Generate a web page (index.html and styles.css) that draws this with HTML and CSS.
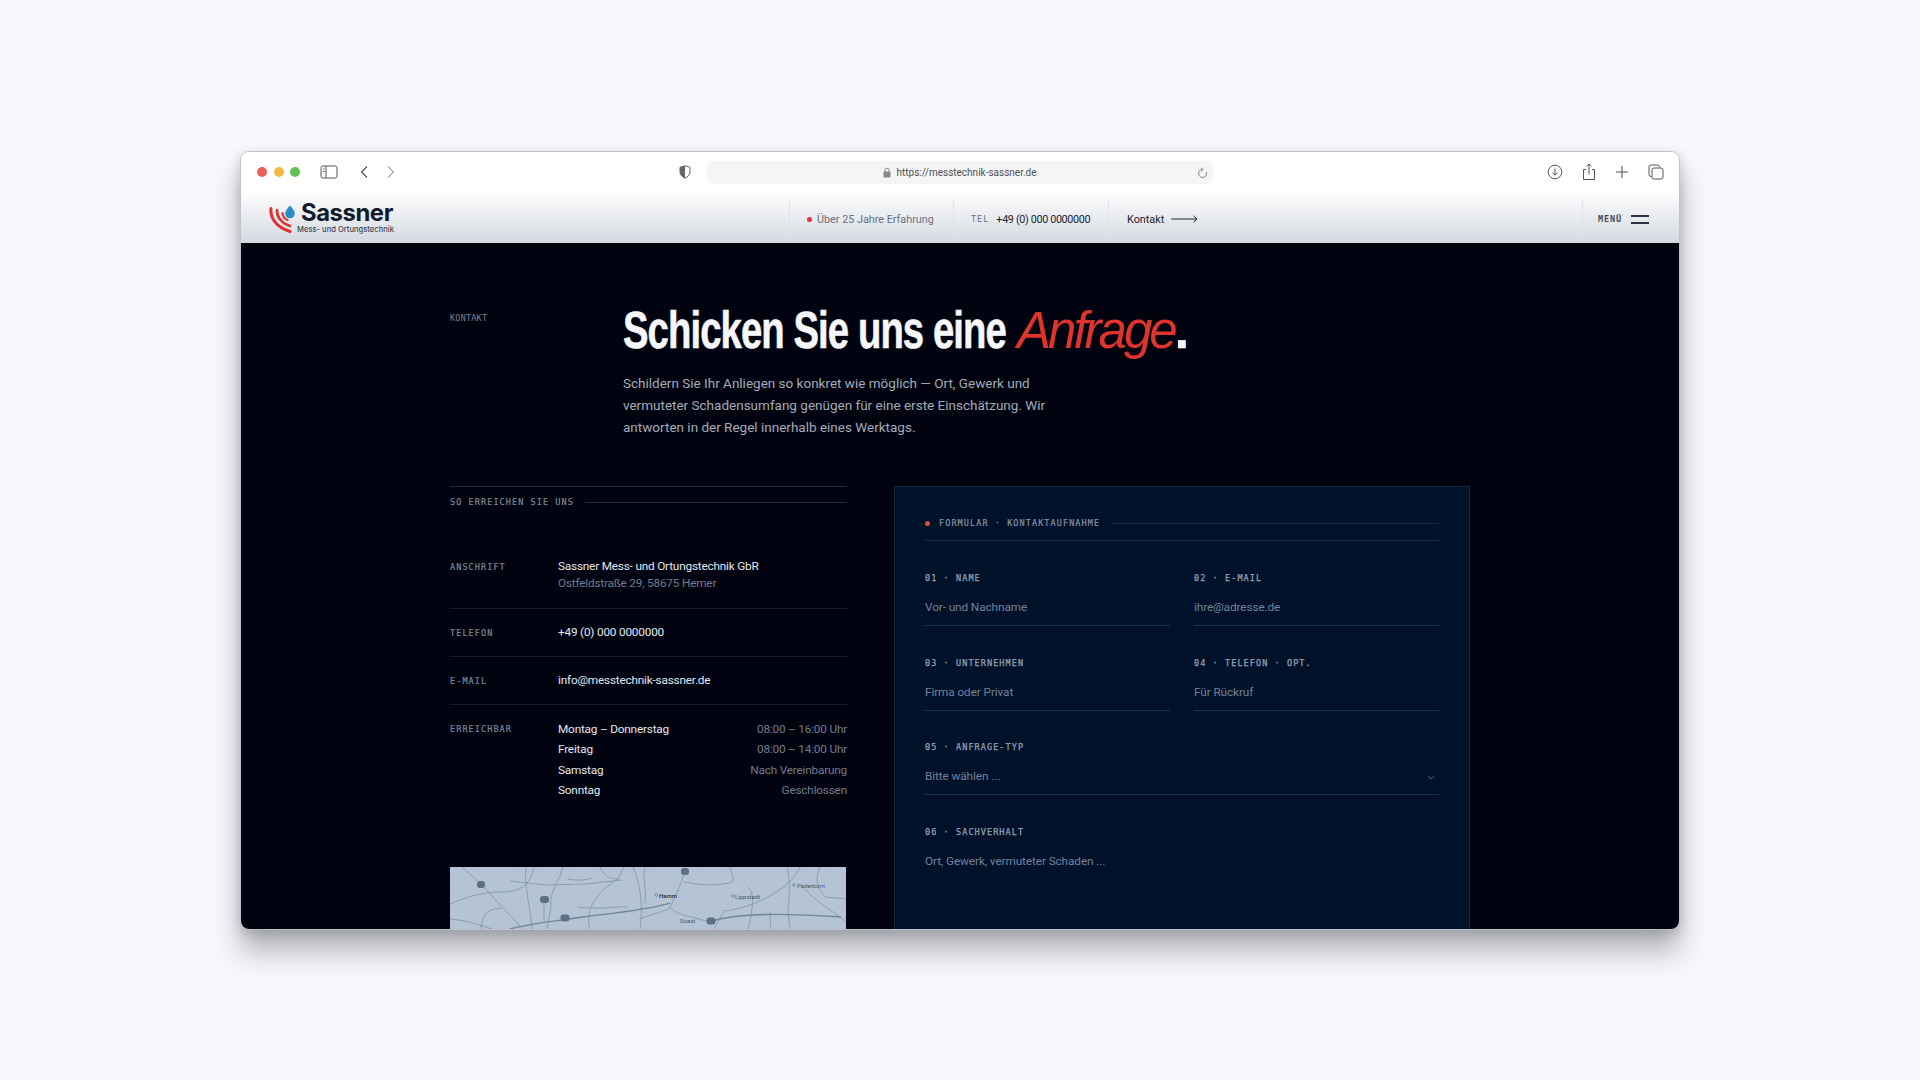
FILE: index.html
```html
<!DOCTYPE html>
<html lang="de">
<head>
    <meta charset="UTF-8">
    <meta name="viewport" content="width=device-width, initial-scale=1.0">
    <title>Sassner - Kontakt</title>
    <link rel="stylesheet" href="styles.css">
</head>
<body>
    <div class="window">
        <!-- Safari toolbar -->
        <div class="toolbar">
            <div class="lights">
                <span class="light red"></span>
                <span class="light yellow"></span>
                <span class="light green"></span>
            </div>
            <svg class="tool-icon sidebar-icon" width="18" height="14" viewBox="0 0 18 14" fill="none" stroke="#555" stroke-width="1">
                <rect x="1" y="1" width="16" height="12" rx="1.5"/>
                <path d="M6 1v12M3 4h1.5M3 6.500h1.500"/>
            </svg>
            <svg class="tool-icon back-icon" width="10" height="14" viewBox="0 0 10 14" fill="none" stroke="#555" stroke-width="1.300">
                <path d="M8 1.500 2.500 7 8 12.500"/>
            </svg>
            <svg class="tool-icon forward-icon" width="10" height="14" viewBox="0 0 10 14" fill="none" stroke="#aaa" stroke-width="1.300">
                <path d="M2 1.500 7.500 7 2 12.500"/>
            </svg>
            <svg class="tool-icon shield-icon" width="12" height="14" viewBox="0 0 12 14">
                <path d="M6 .8 11 2.300v4.500c0 3-2.200 5.100-5 6.400C3.200 11.900 1 9.800 1 6.800V2.300z" fill="none" stroke="#666" stroke-width="1"/>
                <path d="M6 .8 1 2.300v4.500c0 3 2.200 5.100 5 6.400z" fill="#666"/>
            </svg>
            <div class="urlbar">
                <svg class="lock-icon" width="8" height="11" viewBox="0 0 8 11">
                    <path d="M2 5V3.200a2 2 0 0 1 4 0V5" fill="none" stroke="#888" stroke-width="1"/>
                    <rect x=".5" y="4.500" width="7" height="6" rx="1" fill="#888"/>
                </svg>
                <span>https://messtechnik-sassner.de</span>
                <svg class="reload-icon" width="11" height="12" viewBox="0 0 11 12" fill="none" stroke="#777" stroke-width=".9">
                    <path d="M5 2.500a4 4 0 1 0 4.300 2.500M4 .8 6 2.500 4.300 4.300"/>
                </svg>
            </div>
            <div class="tool-right">
                <svg width="16" height="16" viewBox="0 0 16 16" fill="none" stroke="#555" stroke-width="1">
                    <circle cx="8" cy="8" r="6.800"/>
                    <path d="M8 4.500v6.500M5.500 8.700 8 11.200l2.500-2.500"/>
                </svg>
                <svg width="14" height="18" viewBox="0 0 14 18" fill="none" stroke="#555" stroke-width="1">
                    <path d="M4 6.500H1.500v10h11v-10H10M7 11.500V1M4.500 3.300 7 1l2.500 2.300"/>
                </svg>
                <svg width="14" height="14" viewBox="0 0 14 14" fill="none" stroke="#555" stroke-width="1.100">
                    <path d="M7 1v12M1 7h12"/>
                </svg>
                <svg width="16" height="16" viewBox="0 0 16 16" fill="none" stroke="#555" stroke-width="1">
                    <path d="M3.500 12.500H3A2 2 0 0 1 1 10.500V3a2 2 0 0 1 2-2h6.500a2 2 0 0 1 2 2v.5"/>
                    <rect x="4" y="4" width="11" height="11" rx="2"/>
                </svg>
            </div>
        </div>

        <!-- site nav -->
        <header class="nav">
            <div class="logo">
                <svg class="logo-mark" width="30" height="30" viewBox="0 0 30 30" fill="none">
                    <path d="M2 3.500c-1 9.500 5 18.500 19 23" stroke="#e0322c" stroke-width="3" stroke-linecap="round"/>
                    <path d="M8 5c-.5 6.500 4 13 13 16" stroke="#e0322c" stroke-width="2.600" stroke-linecap="round"/>
                    <path d="M13.500 8c.2 3 2 5.500 5 7" stroke="#e0322c" stroke-width="2.200" stroke-linecap="round"/>
                    <path d="M21 .5c2.300 3 4.800 5.200 4.800 8a4.800 4.800 0 0 1-9.600 0c0-2.800 2.500-5 4.800-8z" fill="#2a8fc4"/>
                </svg>
                <div class="logo-text">
                    <div class="logo-name">Sassner</div>
                    <div class="logo-sub">Mess- und Ortungstechnik</div>
                </div>
            </div>
            <div class="nav-cells">
                <div class="nav-cell cell-exp"><span class="red-dot"></span>Über 25 Jahre Erfahrung</div>
                <div class="nav-cell cell-tel"><span class="tel-label">TEL</span>+49 (0) 000 0000000</div>
                <div class="nav-cell cell-contact">Kontakt
                    <svg width="27" height="8" viewBox="0 0 27 8" fill="none" stroke="#222b3a" stroke-width="1">
                        <path d="M0 4h26M22.500 .8 26 4l-3.500 3.200"/>
                    </svg>
                </div>
            </div>
            <div class="nav-menu">
                <span class="menu-label">MENÜ</span>
                <span class="burger"></span>
            </div>
        </header>

        <main class="page">
            <section class="head">
                <div class="eyebrow">KONTAKT</div>
                <div>
                    <h1><span class="h1-main">Schicken Sie uns eine</span><em>Anfrage</em><span>.</span></h1>
                    <p class="lead">Schildern Sie Ihr Anliegen so konkret wie möglich — Ort, Gewerk und vermuteter Schadensumfang genügen für eine erste Einschätzung. Wir antworten in der Regel innerhalb eines Werktags.</p>
                </div>
            </section>

            <section class="columns">
                <div class="info">
                    <div class="rule-label info-title"><span>SO ERREICHEN SIE UNS</span></div>

                    <div class="info-row first">
                        <div class="key">ANSCHRIFT</div>
                        <div class="val">Sassner Mess- und Ortungstechnik GbR<div class="muted">Ostfeldstraße 29, 58675 Hemer</div></div>
                    </div>
                    <div class="info-row">
                        <div class="key">TELEFON</div>
                        <div class="val">+49 (0) 000 0000000</div>
                    </div>
                    <div class="info-row">
                        <div class="key">E-MAIL</div>
                        <div class="val">info@messtechnik-sassner.de</div>
                    </div>
                    <div class="info-row last">
                        <div class="key">ERREICHBAR</div>
                        <div class="hours">
                            <div class="hour"><span>Montag – Donnerstag</span><span class="muted">08:00 – 16:00 Uhr</span></div>
                            <div class="hour"><span>Freitag</span><span class="muted">08:00 – 14:00 Uhr</span></div>
                            <div class="hour"><span>Samstag</span><span class="muted">Nach Vereinbarung</span></div>
                            <div class="hour"><span>Sonntag</span><span class="muted">Geschlossen</span></div>
                        </div>
                    </div>

                    <div class="map">
                        <svg width="396" height="62" viewBox="0 0 396 62" fill="none">
                            <rect width="396" height="62" fill="#b4c4d5"/>
                            <g stroke="#8193a8" stroke-width=".8">
                                <path d="M12 0 31 17l22 24 20 21"/>
                                <path d="M0 52c20 2 30 6 42 10"/>
                                <path d="M0 37c15-6 30-12 50-12s30-6 34-25"/>
                                <path d="M76 0c-2 18 4 38 6 62"/>
                                <path d="M113 0c-4 16-14 24-12 40l-4 22"/>
                                <path d="M94 32v24"/>
                                <path d="M60 14l36 4 40-1 36-4"/>
                                <path d="M118 12c10 2 18 1 24-1"/>
                                <path d="M140 62c-6-20 8-38 28-50l6-12"/>
                                <path d="M150 0c4 10 12 12 18 12"/>
                                <path d="M183 0c8 18 10 40 7 62"/>
                                <path d="M195 0c-3 14 2 20 0 36"/>
                                <path d="M235 4c-4 14-10 26-16 38l-30 10"/>
                                <path d="M220 40c6 10 30 10 40 16"/>
                                <path d="M280 0c2 8 6 14 0 16-20 3-30 2-46-1"/>
                                <path d="M298 20c8 8 4 24 0 42"/>
                                <path d="M337 0c4 16 2 30 1 44l2 18"/>
                                <path d="M350 0c-4 10-12 16-16 20-20 14-40 22-60 24l-10 18"/>
                                <path d="M355 22c10 12 25 20 40 32"/>
                                <path d="M128 40c20 3 40-1 50 0"/>
                                <path d="M320 44c0 8 1 12 0 18"/>
                                <path d="M30 62c4-8 0-20 22-21"/>
                                <path d="M370 0c-6 14-2 24 6 30l20 2"/>
                            </g>
                            <path d="M60 62c30-8 50-8 72-12 30-4 60-6 88-14M261 54c30-8 70-8 130-4" stroke="#72849a" stroke-width="1.300"/>
                            <g fill="#5f7084">
                                <rect x="27" y="14" width="8" height="7" rx="3"/>
                                <rect x="90" y="29" width="9" height="7" rx="3"/>
                                <rect x="110.500" y="47.500" width="9" height="7" rx="3"/>
                                <rect x="231" y="1" width="8" height="7" rx="3"/>
                                <rect x="256.500" y="50.500" width="9" height="7" rx="3"/>
                            </g>
                            <g fill="none" stroke="#5e6e80" stroke-width=".6">
                                <circle cx="206.500" cy="28" r="1.300"/>
                                <circle cx="283" cy="29" r="1.300"/>
                                <circle cx="344" cy="18" r="1.300"/>
                            </g>
                            <text class="map-text strong" x="209" y="31">Hamm</text>
                            <text class="map-text" x="285" y="32">Lippstadt</text>
                            <text class="map-text" x="347" y="21">Paderborn</text>
                            <text class="map-text" x="230" y="56">Soest</text>
                        </svg>
                    </div>
                </div>

                <div class="panel">
                    <div class="rule-label panel-title"><span class="red-dot"></span><span>FORMULAR · KONTAKTAUFNAHME</span></div>
                    <div class="form-grid">
                        <div class="field">
                            <div class="field-label">01 · NAME</div>
                            <div class="field-input">Vor- und Nachname</div>
                        </div>
                        <div class="field">
                            <div class="field-label">02 · E-MAIL</div>
                            <div class="field-input">ihre@adresse.de</div>
                        </div>
                        <div class="field">
                            <div class="field-label">03 · UNTERNEHMEN</div>
                            <div class="field-input">Firma oder Privat</div>
                        </div>
                        <div class="field">
                            <div class="field-label">04 · TELEFON · OPT.</div>
                            <div class="field-input">Für Rückruf</div>
                        </div>
                        <div class="field wide">
                            <div class="field-label">05 · ANFRAGE-TYP</div>
                            <div class="field-input select">Bitte wählen ...
                                <svg width="8" height="5" viewBox="0 0 8 5" fill="none" stroke="#4d6078" stroke-width="1">
                                    <path d="M.8.8 4 4 7.200.8"/>
                                </svg>
                            </div>
                        </div>
                        <div class="field wide">
                            <div class="field-label">06 · SACHVERHALT</div>
                            <div class="field-input textarea">Ort, Gewerk, vermuteter Schaden ...</div>
                        </div>
                    </div>
                </div>
            </section>
        </main>
    </div>
</body>
</html>
```

FILE: styles.css
```css
* {
    box-sizing: border-box;
}

body {
    margin: 0;
    padding: 151px 0 0 240px;
    min-height: 1080px;
    background: #f7f8fc;
    font-family: Roboto, "Noto Sans", sans-serif;
    overflow: hidden;
}

.window {
    width: 1440px;
    height: 779px;
    border-radius: 9px;
    overflow: hidden;
    display: flex;
    flex-direction: column;
    background: #fff;
    border: 1px solid #bfc3c9;
    box-shadow: 0 22px 28px rgba(40, 44, 52, 0.32), 0 4px 12px rgba(40, 44, 52, 0.2);
}

/* toolbar */
.toolbar {
    height: 43px;
    flex: none;
    display: flex;
    align-items: center;
    padding: 0 0 3px 16px;
    background: #fff;
}

.lights {
    display: flex;
    gap: 6.500px;
}

.light {
    width: 10px;
    height: 10px;
    border-radius: 50%;
}

.light.red { background: #ec5f5a; }
.light.yellow { background: #f4b744; }
.light.green { background: #5fc454; }

.tool-icon {
    flex: none;
}

.sidebar-icon { margin-left: 20px; }
.back-icon { margin-left: 21px; }
.forward-icon { margin-left: 17px; }
.shield-icon { margin-left: 283px; }

.urlbar {
    position: relative;
    width: 506px;
    height: 23px;
    margin-left: 16px;
    border-radius: 5px;
    background: #f5f5f6;
    display: flex;
    align-items: center;
    justify-content: center;
    gap: 5px;
    font-size: 10px;
    color: #4e5055;
}

.reload-icon {
    position: absolute;
    right: 5px;
    top: 6px;
}

.tool-right {
    display: flex;
    align-items: center;
    gap: 19px;
    margin-left: auto;
    padding-right: 15px;
}

/* site nav */
.nav {
    height: 48px;
    flex: none;
    display: flex;
    align-items: stretch;
    background: linear-gradient(to bottom, #fafbfc, #d5d9e0);
}

.logo {
    width: 548px;
    padding: 5px 0 0 28px;
    display: flex;
}

.logo-mark {
    margin-top: 5px;
    flex: none;
}

.logo-text {
    margin-left: -2px;
}

.logo-name {
    margin-left: 4px;
    font-family: Inter, sans-serif;
    font-size: 23.800px;
    line-height: 25px;
    font-weight: 700;
    letter-spacing: -0.4px;
    color: #121a2c;
}

.logo-sub {
    font-family: Inter, sans-serif;
    font-size: 7.600px;
    line-height: 10px;
    font-weight: 500;
    color: #3d4654;
    white-space: nowrap;
}

.nav-cells {
    display: flex;
}

.nav-cell {
    display: flex;
    align-items: center;
    margin: 5px 0;
    font-size: 10.800px;
    color: #1c2433;
    border-left: 1px solid #dfe2e7;
    white-space: nowrap;
}

.cell-exp {
    width: 164px;
    padding-left: 17px;
    color: #6a7280;
}

.cell-tel {
    width: 155px;
    padding-left: 17px;
    letter-spacing: -0.35px;
}

.cell-contact {
    padding-left: 18px;
    gap: 7px;
}

.red-dot {
    width: 5px;
    height: 5px;
    flex: none;
    border-radius: 50%;
    background: #e2303c;
}

.cell-exp .red-dot {
    margin-right: 5px;
}

.tel-label {
    margin-right: 7px;
    font-family: "DejaVu Sans Mono", monospace;
    font-size: 8.500px;
    letter-spacing: 1px;
    color: #6a7280;
}

.nav-menu {
    margin: 5px 0 5px auto;
    width: 97px;
    padding-left: 15px;
    border-left: 1px solid #dfe2e7;
    display: flex;
    align-items: center;
    gap: 9px;
}

.menu-label {
    font-family: "DejaVu Sans Mono", monospace;
    font-size: 8.500px;
    font-weight: 700;
    letter-spacing: .9px;
    color: #444c5a;
}

.burger {
    width: 18px;
    height: 9px;
    border-top: 2px solid #2c3442;
    border-bottom: 2px solid #2c3442;
}

/* page */
.page {
    flex: 1;
    overflow: hidden;
    padding: 58px 209px 0;
    background: #00030f;
    color: #e8ebf1;
}

.head {
    display: grid;
    grid-template-columns: 173px 1fr;
}

.eyebrow {
    font-family: "DejaVu Sans Mono", monospace;
    font-size: 8.500px;
    line-height: 14px;
    letter-spacing: .2px;
    color: #77808e;
    margin-top: 10px;
}

h1 {
    display: flex;
    margin: 0;
    font-family: "Liberation Sans", sans-serif;
    font-size: 51px;
    line-height: 60px;
    font-weight: 700;
    letter-spacing: -1.200px;
    color: #f6f7fb;
    white-space: nowrap;
    -webkit-text-stroke: 0.6px #f6f7fb;
}

.h1-main {
    width: 394px;
    transform: scaleX(0.75);
    transform-origin: left;
}

h1 em {
    color: #e0332c;
    font-weight: 400;
    letter-spacing: -3px;
    -webkit-text-stroke: 0;
}

.lead {
    width: 440px;
    margin: 11px 0 0;
    font-size: 13.500px;
    line-height: 22px;
    color: #a4abb6;
}

.columns {
    display: grid;
    grid-template-columns: 397px 576px;
    column-gap: 47px;
    margin-top: 48px;
}

.rule-label {
    display: flex;
    align-items: center;
    font-family: "DejaVu Sans Mono", monospace;
    font-size: 8.500px;
    letter-spacing: 1.080px;
    white-space: nowrap;
    color: #7d8796;
    -webkit-text-stroke: 0.2px #7d8796;
}

.rule-label::after {
    content: "";
    flex: 1;
    height: 1px;
    margin-left: 11px;
    background: #222c3d;
}

.info {
    border-top: 1px solid #222c3d;
}

.info-title {
    height: 14px;
    margin-top: 8px;
}

.info-row {
    display: grid;
    grid-template-columns: 108px 1fr;
    padding: 15px 0;
    font-size: 11.800px;
    line-height: 17px;
    letter-spacing: -0.2px;
    border-bottom: 1px solid #161d2b;
    color: #e3e7ee;
}

.info-row.first {
    margin-top: 34px;
    padding-bottom: 16px;
}

.info-row.last {
    border-bottom: 0;
}

.key {
    height: 17px;
    padding-top: 1px;
    font-family: "DejaVu Sans Mono", monospace;
    font-size: 8.500px;
    line-height: 17px;
    letter-spacing: 1.080px;
    color: #7d8796;
    -webkit-text-stroke: 0.2px #7d8796;
}

.muted {
    color: #727b8b;
}

.hours {
    display: flex;
    flex-direction: column;
    gap: 3.300px;
    padding-top: 1px;
}

.hour {
    display: flex;
    justify-content: space-between;
}

.map {
    height: 62px;
    margin-top: 53px;
}

.map svg {
    display: block;
}

.map-text {
    font-size: 6px;
    fill: #4a5868;
}

.map-text.strong {
    font-weight: 600;
    fill: #2a3340;
}

.panel {
    height: 460px;
    padding: 0 30px;
    background: #00112a;
    border: 1px solid #14283f;
}

.panel-title {
    height: 54px;
    padding-top: 19px;
    border-bottom: 1px solid #16304a;
    color: #8793a4;
    -webkit-text-stroke: 0.2px #8793a4;
}

.panel-title .red-dot {
    margin-right: 9px;
    background: #d9503f;
}

.panel-title::after {
    background: #122a44;
}

.form-grid {
    display: grid;
    grid-template-columns: 1fr 1fr;
    gap: 29.500px 24px;
    margin-top: 30px;
}

.field.wide {
    grid-column: span 2;
}

.field-label {
    font-family: "DejaVu Sans Mono", monospace;
    font-size: 8.500px;
    line-height: 14px;
    letter-spacing: 1.080px;
    color: #93a0b2;
    -webkit-text-stroke: 0.25px #93a0b2;
}

.field-input {
    margin-top: 14px;
    height: 27px;
    font-size: 11.800px;
    line-height: 17px;
    letter-spacing: -0.1px;
    color: #73819a;
    border-bottom: 1px solid #1b3350;
}

.field-input.select {
    display: flex;
    justify-content: space-between;
    align-items: flex-start;
    padding-right: 4px;
}

.field-input.select svg {
    margin-top: 7px;
}

.field-input.textarea {
    height: 60px;
    border-bottom: 0;
}
```
